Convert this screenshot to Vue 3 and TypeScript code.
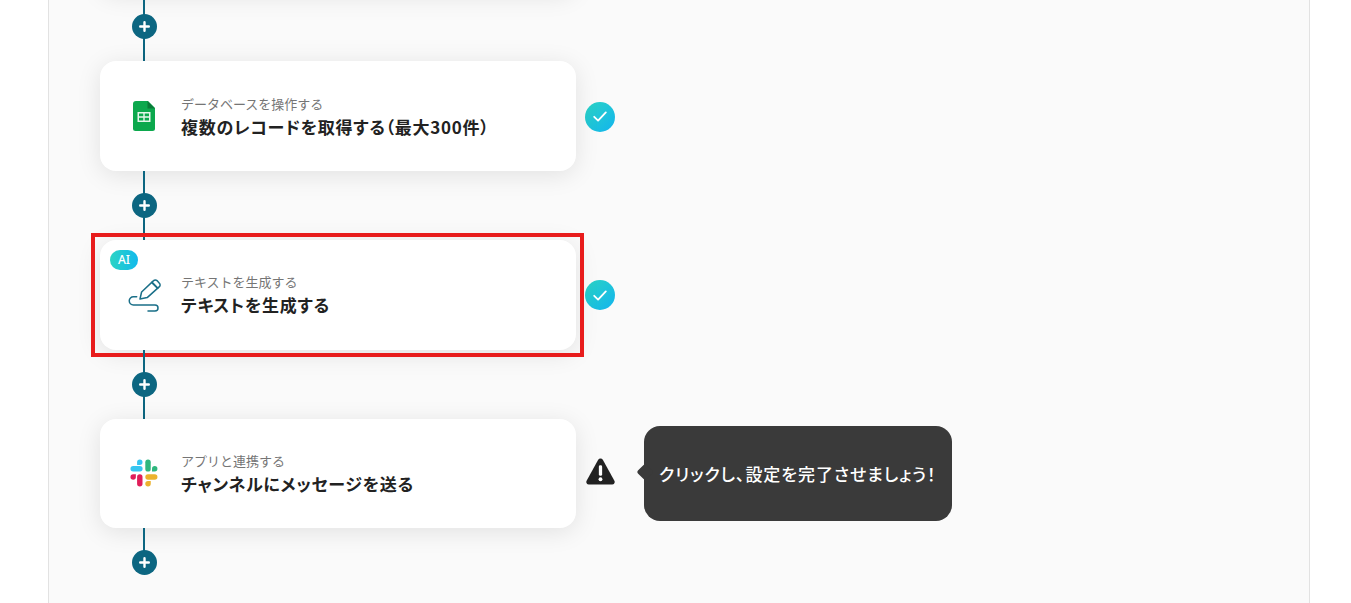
<script setup lang="ts">
interface Step {
  id: number
  icon: 'sheets' | 'ai' | 'slack' | 'none'
  label: string
  title: string
  status: 'done' | 'warning'
  highlighted?: boolean
  hint?: string
  last?: boolean
}

const steps: Step[] = [
  { id: 0, icon: 'none', label: '', title: '', status: 'done' },
  { id: 1, icon: 'sheets', label: 'データベースを操作する', title: '複数のレコードを取得する（最大300件）', status: 'done' },
  { id: 2, icon: 'ai', label: 'テキストを生成する', title: 'テキストを生成する', status: 'done', highlighted: true },
  { id: 3, icon: 'slack', label: 'アプリと連携する', title: 'チャンネルにメッセージを送る', status: 'warning', hint: 'クリックし、設定を完了させましょう！', last: true },
]
</script>

<template>
  <main class="page">
    <section class="panel">
      <div class="flow">
        <template v-for="step in steps" :key="step.id">
          <div class="row">
            <article class="card" :class="{ 'card--marked': step.highlighted }">
              <span v-if="step.icon === 'ai'" class="ai-badge">AI</span>
              <div class="card__icon">
                <svg v-if="step.icon === 'sheets'" width="22" height="30" viewBox="0 0 22 30">
                  <path d="M3 0h12l7 7v20.5a2.5 2.5 0 0 1-2.5 2.5h-17A2.5 2.5 0 0 1 0 27.500V3a3 3 0 0 1 3-3z" fill="#0ca84d" />
                  <path d="M14.500 0L22 7.500h-7.500z" fill="#0a7a38" />
                  <path d="M4.500 11h13v10h-13zM6 12.500v2.800h4.300v-2.800zm5.700 0v2.800H16v-2.800zM6 16.700v2.800h4.300v-2.800zm5.700 0v2.800H16v-2.800z" fill="#e6f6ec" fill-rule="evenodd" />
                </svg>
                <svg v-else-if="step.icon === 'ai'" width="34" height="34" viewBox="0 0 34 34" fill="none" stroke="#1a6f88" stroke-width="1.500" stroke-linecap="round" stroke-linejoin="round">
                  <path d="M13 21l1.600-7L26.600 2.600a2.400 2.400 0 0 1 3.400 0l2.400 2.600a2.400 2.400 0 0 1 0 3.400L20.200 19.600z" />
                  <path d="M25 4.500l5.600 5.600" stroke-width="2" />
                  <path d="M9.700 18.700H6.400a4.150 4.150 0 0 0 0 8.300H28a3 3 0 0 1 0 6H21" />
                </svg>
                <svg v-else-if="step.icon === 'slack'" width="28" height="28" viewBox="0 0 30 30">
                  <rect x="0.500" y="7.600" width="13" height="5.800" rx="2.900" fill="#36c5f0" />
                  <path d="M7.600 3.400a2.900 2.900 0 1 1 2.900 2.900H7.600z" fill="#36c5f0" />
                  <rect x="16.400" y="0.500" width="5.800" height="13" rx="2.900" fill="#2eb67d" />
                  <path d="M23.600 10.500a2.900 2.900 0 1 1 2.900 2.900h-2.900z" fill="#2eb67d" />
                  <rect x="16.400" y="16.400" width="13" height="5.800" rx="2.900" fill="#ecb22e" />
                  <path d="M22.200 26.500a2.900 2.900 0 1 1-2.900-2.900h2.900z" fill="#ecb22e" />
                  <rect x="7.600" y="16.400" width="5.800" height="13" rx="2.900" fill="#e01e5a" />
                  <path d="M6.300 19.300a2.900 2.900 0 1 1-2.900-2.900h2.900z" fill="#e01e5a" />
                </svg>
              </div>
              <div class="card__text">
                <p class="card__label">{{ step.label }}</p>
                <h3 class="card__title">{{ step.title }}</h3>
              </div>
            </article>

            <span v-if="step.status === 'done'" class="status status--done">
              <svg width="14" height="11" viewBox="0 0 14 11" fill="none" stroke="#fff" stroke-width="1.800" stroke-linecap="round" stroke-linejoin="round">
                <path d="M1.200 5.800l3.900 3.800L12.800 1.400" />
              </svg>
            </span>
            <span v-else class="status status--warning">
              <svg width="29" height="27" viewBox="0 0 30 28">
                <path d="M15 .5a2.800 2.800 0 0 1 2.400 1.400l12 21.800a2.600 2.600 0 0 1-2.300 3.800H2.900a2.600 2.600 0 0 1-2.300-3.800l12-21.800A2.800 2.800 0 0 1 15 .5z" fill="#222" />
                <rect x="13.300" y="7.500" width="3.400" height="11" rx="1.500" fill="#fff" />
                <circle cx="15" cy="22" r="2" fill="#fff" />
              </svg>
            </span>

            <div v-if="step.hint" class="hint">{{ step.hint }}</div>
          </div>

          <div class="connector" :class="{ 'connector--end': step.last }">
            <span class="plus">
              <svg width="11" height="11" viewBox="0 0 11 11" stroke="#fff" stroke-width="2.400" stroke-linecap="round">
                <path d="M5.500 1.200v8.600M1.200 5.500h8.600" />
              </svg>
            </span>
          </div>
        </template>
      </div>
    </section>
  </main>
</template>

<style scoped>
.page {
  height: 603px;
  overflow: hidden;
  background: #fff;
  font-family: 'Noto Sans CJK JP', 'Noto Sans', sans-serif;
  color: #222;
}

.panel {
  box-sizing: border-box;
  width: 1262px;
  height: 603px;
  margin-left: 48px;
  overflow: hidden;
  background: #fafafa;
  border-left: 1px solid #e2e2e2;
  border-right: 1px solid #e2e2e2;
}

/* the page is scrolled, so the first card sits above the fold */
.flow {
  margin-top: -117.2px;
  padding-left: 51px;
}

.row {
  display: flex;
  align-items: center;
  height: 109.6px;
}

.card {
  position: relative;
  box-sizing: border-box;
  display: flex;
  align-items: center;
  gap: 19px;
  width: 476px;
  height: 109.6px;
  padding-left: 26px;
  background: #fff;
  border-radius: 16px;
  box-shadow: 0 4px 24px rgba(0, 0, 0, 0.1);
}

.card--marked::after {
  content: '';
  position: absolute;
  inset: -7px -8px -7px -9px;
  border: 4.5px solid #e81c1c;
  pointer-events: none;
}

.card__icon {
  display: flex;
  align-items: center;
  justify-content: center;
  flex: none;
  width: 36px;
  height: 36px;
}

.card__text {
  margin-top: 1px;
}

.card__label {
  margin: 0;
  font-size: 13px;
  line-height: 18px;
  color: #757575;
}

.card__title {
  margin: 2px 0 0;
  font-size: 17px;
  line-height: 24px;
  font-weight: 700;
  font-feature-settings: 'palt';
  letter-spacing: 0.72px;
  color: #222;
}

.ai-badge {
  position: absolute;
  top: 10px;
  left: 10px;
  width: 28px;
  height: 20px;
  border-radius: 10px;
  background: linear-gradient(90deg, #2bd4c4, #12b9ec);
  color: #fff;
  font-family: 'Noto Sans', sans-serif;
  font-size: 12px;
  font-weight: 500;
  line-height: 20px;
  text-align: center;
}

.status {
  display: flex;
  align-items: center;
  justify-content: center;
  flex: none;
  width: 30px;
  height: 30px;
  margin-left: 9px;
  border-radius: 50%;
}

.status--done {
  margin-top: 1px;
  background: linear-gradient(135deg, #2bd4c4, #12b4ee);
}

.status--warning {
  margin-top: -4px;
}

.hint {
  position: relative;
  box-sizing: border-box;
  display: flex;
  align-items: center;
  align-self: flex-start;
  width: 308px;
  height: 95px;
  margin-top: 7px;
  margin-left: 29px;
  padding-left: 15px;
  background: #3a3a3a;
  border-radius: 16px;
  color: #fff;
  font-size: 17px;
  font-weight: 500;
  font-feature-settings: 'palt';
  letter-spacing: 0.95px;
}

.hint::before {
  content: '';
  position: absolute;
  left: -5px;
  top: 40px;
  width: 12px;
  height: 12px;
  border-radius: 2px;
  background: #3a3a3a;
  transform: rotate(45deg);
}

.connector {
  position: relative;
  display: flex;
  align-items: center;
  justify-content: center;
  width: 88px;
  height: 69px;
}

.connector::before {
  content: '';
  position: absolute;
  top: 0;
  bottom: 0;
  left: 43px;
  width: 2px;
  background: #0c6681;
}

.connector--end::before {
  bottom: 34px;
}

.plus {
  position: relative;
  display: flex;
  align-items: center;
  justify-content: center;
  width: 25px;
  height: 25px;
  border-radius: 50%;
  background: #0c6681;
}
</style>

<style>
html,
body {
  margin: 0;
  overflow: hidden;
}
</style>
